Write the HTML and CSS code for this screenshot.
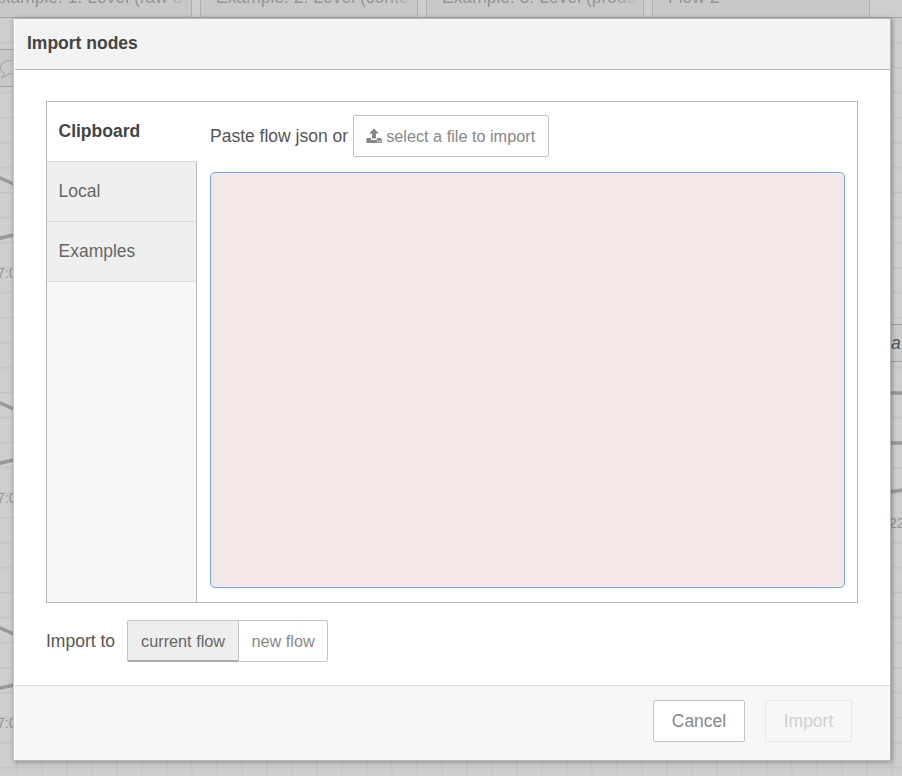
FILE: index.html
```html
<!DOCTYPE html>
<html lang="en">
<head>
<meta charset="utf-8">
<title>Import nodes</title>
<link rel="stylesheet" href="styles.css">
</head>
<body>
<div class="workspace">
  <nav class="flow-tabs">
    <div class="flow-tab"><span>Example: 1: Level (raw data)</span></div>
    <div class="flow-tab"><span>Example: 2: Level (context)</span></div>
    <div class="flow-tab"><span>Example: 3: Level (product)</span></div>
    <div class="flow-tab"><span>Flow 2</span></div>
  </nav>
  <svg class="canvas" width="902" height="758" viewBox="0 18 902 758">
    <defs>
      <pattern id="grid" x="16.2" y="16.7" width="25" height="25" patternUnits="userSpaceOnUse">
        <path d="M0 .9H25M.8 0V25" fill="none" stroke="#c4c4c4" stroke-width="1.6"/>
      </pattern>
    </defs>
    <rect y="18" width="902" height="758" fill="url(#grid)"/>
    <rect x="-60" y="49.5" width="120" height="37" fill="#c8c8c8" stroke="#a0a0a0"/>
    <path d="M14 60.500H10C4 60.500 .5 64 .5 67.500c0 2.500 1.500 4.500 3.800 5.700 0 1.500-1 3-2.500 4 3 0 5-1.500 6.500-3.500h6" fill="none" stroke="#ababab" stroke-width="1.2"/>
    <g fill="none" stroke="#999" stroke-width="3.500">
      <path d="M-4 176L18 186M-4 239L18 234"/>
      <path d="M-4 401L18 411M-4 464L18 459"/>
      <path d="M-4 626L18 636M-4 689L18 684"/>
      <path d="M888 393H904M888 443H904M888 492Q896 491.500 904 489.500"/>
    </g>
    <g class="node-status">
      <text x="-3" y="278">7:00</text>
      <text x="-3" y="503">7:00</text>
      <text x="-3" y="728">7:00</text>
      <text x="889" y="528">22</text>
    </g>
    <rect x="850" y="324.500" width="80" height="37" fill="#cbcbcb" stroke="#a0a0a0"/>
    <text class="node-label" x="891" y="349">a</text>
  </svg>
</div>

<section class="dialog">
  <header class="dialog-title">Import nodes</header>
  <div class="dialog-body">
    <div class="import-box">
      <div class="sources">
        <div class="source active">Clipboard</div>
        <div class="source">Local</div>
        <div class="source">Examples</div>
        <div class="source-fill"></div>
      </div>
      <div class="clipboard">
        <div class="file-row">
          <span>Paste flow json or</span>
          <button class="button small">
            <svg width="16" height="16" viewBox="0 0 16 16"><path fill="currentColor" fill-rule="evenodd" d="M8 .4L13 5.600H10V10.500H6V5.600H3ZM1 10H5V11Q5 12 6.200 12H9.800Q11 12 11 11V10H15Q15.700 10 15.700 10.800V14.200Q15.700 15 15 15H1Q.300 15 .300 14.200V10.800Q.300 10 1 10ZM11 12.800V14H12.200V12.800ZM13.300 12.800V14H14.500V12.800Z"/></svg>
            select a file to import
          </button>
        </div>
        <textarea class="json-input" spellcheck="false"></textarea>
      </div>
    </div>
    <div class="target-row">
      <span>Import to</span>
      <div class="toggle">
        <button class="toggle-button selected">current flow</button>
        <button class="toggle-button">new flow</button>
      </div>
    </div>
  </div>
  <footer class="dialog-footer">
    <button class="button cancel">Cancel</button>
    <button class="button import" disabled>Import</button>
  </footer>
</section>
</body>
</html>
```
FILE: styles.css
```css
* { box-sizing: border-box; }

body {
  margin: 0;
  height: 776px;
  overflow: hidden;
  background: #cecece;
  color: #555;
  font: 17.5px/25px "Liberation Sans", Arial, sans-serif;
}

button { font-family: inherit; margin: 0; }

.workspace { height: 776px; overflow: hidden; }

.flow-tabs {
  display: flex;
  gap: 8px;
  height: 18px;
  margin-left: -26px;
  border-bottom: 1px solid #aaa;
  overflow: hidden;
}

.flow-tab {
  flex: none;
  display: flex;
  align-items: flex-end;
  width: 218px;
  height: 17px;
  padding: 0 3px 7px 15px;
  border: solid #b0b0b0;
  border-width: 0 1px;
  background: #c8c8c8;
  color: #939393;
}

.flow-tab span {
  flex: 1;
  overflow: hidden;
  white-space: nowrap;
  -webkit-mask-image: linear-gradient(to right, #000 calc(100% - 25px), transparent);
  mask-image: linear-gradient(to right, #000 calc(100% - 25px), transparent);
}

.canvas { display: block; }
.node-status { font-size: 14px; fill: #949494; }
.node-label { font-size: 17.5px; font-style: italic; fill: #555; }

/* The dialog floats over the workspace */
.dialog {
  position: absolute;
  left: 13px;
  top: 18px;
  display: flex;
  flex-direction: column;
  width: 878px;
  height: 743px;
  border: 1px solid #b9b9b9;
  border-left-color: #c6c6c6;
  background: #fff;
  box-shadow: 1px 1px 5px rgba(0, 0, 0, .35);
}

.dialog-title {
  height: 51px;
  margin-left: 1px;
  padding: 12px 12px 0;
  border-bottom: 1px solid #b8b8b8;
  background: #f3f3f3;
  color: #444;
  font-weight: bold;
}

.dialog-body { flex: 1; padding: 31px 32px 0; }

.import-box {
  display: flex;
  width: 812px;
  height: 502px;
  border: 1px solid #b8b8b8;
}

.sources { display: flex; flex-direction: column; width: 150px; }

.source {
  height: 60px;
  padding: 17px 11.500px;
  border-right: 1px solid #b8b8b8;
  border-bottom: 1px solid #dadada;
  background: #efefef;
  color: #666;
}

.source.active {
  border-right-color: transparent;
  background: #fff;
  color: #444;
  font-weight: bold;
}

.source-fill { flex: 1; border-right: 1px solid #b8b8b8; background: #f7f7f7; }

.clipboard {
  flex: 1;
  display: flex;
  flex-direction: column;
  gap: 15px;
  padding: 13px 12px 14px 13px;
}

.file-row { display: flex; align-items: center; gap: 5px; }

.button {
  display: flex;
  align-items: center;
  justify-content: center;
  height: 42px;
  padding: 0 12px;
  border: 1px solid #c4c4c4;
  border-radius: 2px;
  background: #fff;
  color: #888;
  font-size: 17.5px;
}

.button.small {
  justify-content: flex-start;
  gap: 4px;
  width: 196px;
  font-size: 16.25px;
  white-space: nowrap;
}

.json-input {
  flex: 1;
  width: 635px;
  border: 1px solid #72a5e4;
  border-radius: 5px;
  outline: none;
  background: #f3e7e7;
  resize: none;
}

.target-row { display: flex; align-items: center; gap: 12px; margin-top: 17px; }

.toggle { display: flex; }

.toggle-button {
  width: 90px;
  height: 42px;
  margin-left: -1px;
  padding: 0;
  border: 1px solid #c4c4c4;
  border-radius: 0 2px 2px 0;
  background: #fff;
  color: #888;
  font-size: 16.25px;
}

.toggle-button.selected {
  width: 112px;
  margin-left: 0;
  padding-top: 1px;
  border-bottom: 2px solid #aaa;
  border-radius: 2px 0 0 2px;
  background: #eee;
  color: #666;
}

.dialog-footer {
  display: flex;
  justify-content: flex-end;
  gap: 20px;
  height: 75px;
  margin-left: 1px;
  padding: 14px 38px 0;
  border-top: 1px solid #dadada;
  background: #f7f7f7;
}

.cancel { width: 92px; }
.import { width: 87px; border-color: #e6e6e6; background: #f7f7f7; color: #d0d0d0; }
```
